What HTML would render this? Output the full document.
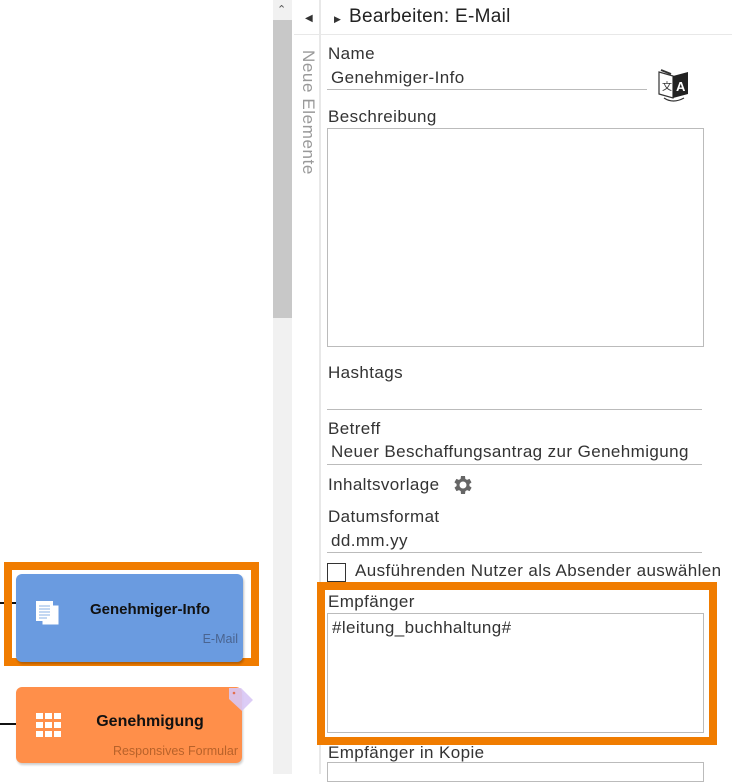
<!DOCTYPE html>
<html><head><meta charset="utf-8"><style>
*{box-sizing:border-box;margin:0;padding:0}
body{width:732px;height:774px;overflow:hidden;background:#fff;font-family:"Liberation Sans",Roboto,sans-serif;position:relative;color:#333}
.a{position:absolute}
.lbl{position:absolute;left:328px;font-size:17px;letter-spacing:0.4px;color:#333}
.val{position:absolute;left:331px;font-size:17px;letter-spacing:0.4px;color:#333}
.ul{position:absolute;left:327px;height:1px;background:#bbb}
.box{position:absolute;left:327px;width:377px;border:1px solid #bbb;background:#fff}
</style></head><body>
<div class="a" style="left:273px;top:0;width:19px;height:774px;background:#f1f1f1"></div>
<div class="a" style="left:273px;top:20px;width:19px;height:298px;background:#c8c8c8"></div>
<div class="a" style="left:277px;top:3px;font-size:11px;color:#555">&#8963;</div>
<div class="a" style="left:319px;top:0;width:2px;height:774px;background:#e8e8e8"></div>
<div class="a" style="left:294px;top:34px;width:438px;height:1px;background:#e8e8e8"></div>
<div class="a" style="left:305px;top:13px;font-size:10px;color:#333">&#9664;</div>
<div class="a" style="left:334px;top:14px;font-size:9px;color:#333">&#9654;</div>
<div class="a" style="left:349px;top:6px;font-size:19px;letter-spacing:0.3px;color:#222">Bearbeiten: E-Mail</div>
<div class="a" style="left:298px;top:50px;writing-mode:vertical-rl;font-size:17px;letter-spacing:0.6px;color:#999">Neue Elemente</div>

<div class="lbl" style="top:44px">Name</div>
<div class="val" style="top:68px">Genehmiger-Info</div>
<div class="ul" style="top:89px;width:320px"></div>
<svg class="a" style="left:656px;top:66px" width="36" height="36" viewBox="0 0 36 36">
<path d="M3 6 L17 10 L17 32 L3 28 Z" fill="#fff" stroke="#333" stroke-width="1.2"/>
<path d="M17 10 L32 6 L32 28 L17 32 Z" fill="#222"/>
<path d="M5 4 L15 8" stroke="#333" stroke-width="2"/>
<text x="6" y="24" font-size="10" fill="#333" font-family="Noto Sans CJK JP,sans-serif">文</text>
<text x="20" y="25" font-size="13" font-weight="bold" fill="#fff" font-family="Liberation Sans,sans-serif">A</text>
<path d="M8 32 Q17 38 28 32" stroke="#333" stroke-width="1.2" fill="none"/>
</svg>

<div class="lbl" style="top:107px">Beschreibung</div>
<div class="box" style="top:128px;height:219px"></div>

<div class="lbl" style="top:363px">Hashtags</div>
<div class="ul" style="top:409px;width:375px"></div>

<div class="lbl" style="top:419px">Betreff</div>
<div class="val" style="top:442px">Neuer Beschaffungsantrag zur Genehmigung</div>
<div class="ul" style="top:464px;width:375px"></div>

<div class="lbl" style="top:475px">Inhaltsvorlage</div>
<svg class="a" style="left:451px;top:473px" width="24" height="24" viewBox="0 0 24 24"><path fill="#666" d="M19.4 13a7.5 7.5 0 0 0 0-2l2.1-1.6-2-3.5-2.5 1a7.6 7.6 0 0 0-1.7-1L15 3h-4l-.4 2.9a7.6 7.6 0 0 0-1.7 1l-2.5-1-2 3.5L6.6 11a7.5 7.5 0 0 0 0 2l-2.1 1.6 2 3.5 2.5-1a7.6 7.6 0 0 0 1.7 1L11 21h4l.4-2.9a7.6 7.6 0 0 0 1.7-1l2.5 1 2-3.5zM13 15.5a3.5 3.5 0 1 1 0-7 3.5 3.5 0 0 1 0 7z" transform="translate(-1 0)"/></svg>

<div class="lbl" style="top:507px">Datumsformat</div>
<div class="val" style="top:531px">dd.mm.yy</div>
<div class="ul" style="top:552px;width:375px"></div>

<div class="a" style="left:327px;top:563px;width:19px;height:19px;border:1px solid #333"></div>
<div class="a" style="left:355px;top:561px;font-size:17px;letter-spacing:0.4px;color:#333;white-space:nowrap">Ausführenden Nutzer als Absender auswählen</div>

<div class="a" style="left:317px;top:582px;width:400px;height:163px;border:8px solid #f07c00"></div>
<div class="lbl" style="top:592px">Empfänger</div>
<div class="box" style="top:613px;height:120px"></div>
<div class="val" style="top:618px;left:332px">#leitung_buchhaltung#</div>

<div class="lbl" style="top:743px">Empfänger in Kopie</div>
<div class="box" style="top:762px;height:20px"></div>
<div class="a" style="left:317px;top:737px;width:400px;height:8px;background:#f07c00"></div>

<div class="a" style="left:0;top:602px;width:16px;height:2px;background:#111"></div>
<div class="a" style="left:4px;top:562px;width:255px;height:104px;border:8px solid #f07c00"></div>
<div class="a" style="left:16px;top:574px;width:227px;height:88px;background:#6a9be0;border-radius:6px;box-shadow:1px 2px 2px rgba(0,0,0,.25)"></div>
<svg class="a" style="left:35px;top:600px" width="26" height="26" viewBox="0 0 26 26">
<rect x="7" y="5" width="17" height="20" fill="#fff" stroke="#6a9be0"/>
<rect x="1" y="1" width="17" height="20" fill="#fff"/>
<path d="M4 6h11M4 9h11M4 12h11M4 15h11M4 18h8" stroke="#8ab0e6" stroke-width="1"/>
</svg>
<div class="a" style="left:70px;top:601px;width:160px;text-align:center;font-size:15px;font-weight:bold;color:#111">Genehmiger-Info</div>
<div class="a" style="left:160px;top:632px;width:78px;text-align:right;font-size:12.5px;color:#4a6490">E-Mail</div>

<div class="a" style="left:0;top:723px;width:16px;height:2px;background:#111"></div>
<div class="a" style="left:16px;top:687px;width:226px;height:76px;background:#ff8f4a;border-radius:6px;box-shadow:1px 2px 2px rgba(0,0,0,.2)"></div>
<svg class="a" style="left:36px;top:713px" width="25" height="25" viewBox="0 0 25 25" fill="#fff">
<rect x="0" y="0" width="7" height="6"/><rect x="9" y="0" width="7" height="6"/><rect x="18" y="0" width="7" height="6"/>
<rect x="0" y="9" width="7" height="6"/><rect x="9" y="9" width="7" height="6"/><rect x="18" y="9" width="7" height="6"/>
<rect x="0" y="18" width="7" height="6"/><rect x="9" y="18" width="7" height="6"/><rect x="18" y="18" width="7" height="6"/>
</svg>
<div class="a" style="left:70px;top:713px;width:160px;text-align:center;font-size:16px;font-weight:bold;color:#111">Genehmigung</div>
<div class="a" style="left:60px;top:744px;width:178px;text-align:right;font-size:12.5px;color:#b8622a;white-space:nowrap">Responsives Formular</div>
<svg class="a" style="left:228px;top:687px" width="26" height="26" viewBox="0 0 26 26"><path d="M1 1h12l12 12-11 11L1 12z" fill="#d8c6f5" opacity=".9"/><circle cx="6" cy="6" r="1.3" fill="#e27050"/></svg>
</body></html>
